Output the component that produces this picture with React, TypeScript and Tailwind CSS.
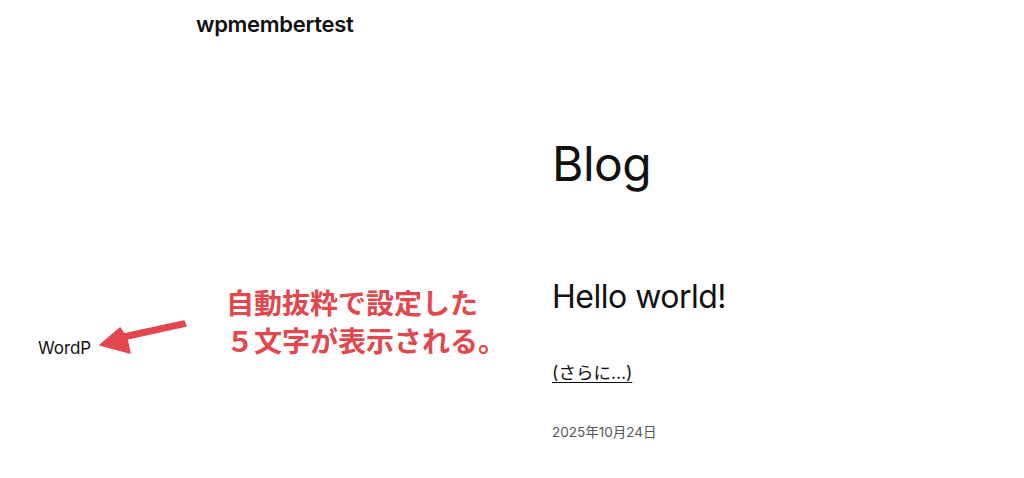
import React from 'react';

const sans = "font-['Inter','Noto_Sans_CJK_JP',sans-serif]";

export default function App() {
    return (
        <div className={`relative w-[1024px] h-[478px] overflow-hidden bg-white text-[#111111] ${sans}`}>
            {/* HEADER */}
            <header className="pl-[196px] pt-[11px]">
                <p className="text-[22px] leading-[26px] font-semibold tracking-[-0.3px]">wpmembertest</p>
            </header>

            {/* POSTS */}
            <main className="grid grid-cols-[552px_1fr] pt-[96px]">
                <div className="pl-[38px] pt-[203px]">
                    <p className="text-[17px] leading-[24px] tracking-[-0.1px]">WordP</p>
                </div>
                <div>
                    <h1 className="text-[48px] leading-[62px] font-normal tracking-[-0.5px]">Blog</h1>
                    <h2 className="mt-[82px] text-[32px] leading-[40px] font-normal tracking-[-0.5px]">Hello world!</h2>
                    <a href="#" className="mt-[44px] block text-[17.5px] leading-[24px] underline underline-offset-[3px]">
                        (さらに…)
                    </a>
                    <p className="mt-[37px] text-[13.5px] leading-[20px] text-[#555555]">2025年10月24日</p>
                </div>
            </main>

            {/* ANNOTATION */}
            <svg className="absolute left-0 top-0" width="1024" height="478" viewBox="0 0 1024 478">
                <path
                    d="M184 321 L186 326 L127 339 L130 353 L100 345 L120 328 L124 334 Z"
                    fill="#e3474e"
                    stroke="#e3474e"
                    strokeWidth="1.5"
                    strokeLinejoin="round"
                />
            </svg>
            <p className="absolute left-[226px] top-[283px] text-[28px] leading-[38px] font-bold text-[#e3474e] font-['Noto_Sans_CJK_JP',sans-serif]">
                自動抜粋で設定した
                <br />
                ５文字が表示される。
            </p>
        </div>
    );
}
